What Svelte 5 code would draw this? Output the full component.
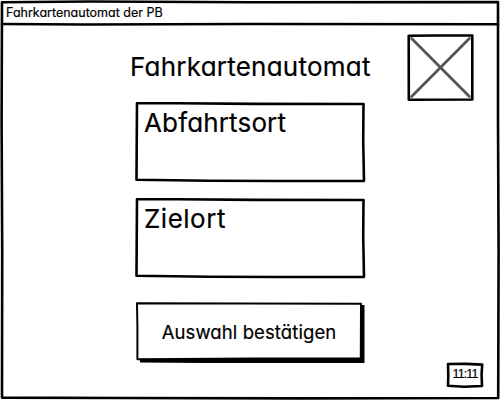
<script>
  const fields = ['Abfahrtsort', 'Zielort'];
</script>

<main class="window">
  <svg class="frame" viewBox="0 0 500 400" aria-hidden="true">
    <path d="M2 2.2L90 1.5L250 2.2L498 2L498 120L498.6 250L498.2 398L300 398.4L120 398L2 397.6L2.2 250L1.6 120Z" />
    <path d="M2 24L85 24.5L250 24L498 24.2" />
  </svg>
  <header><span>Fahrkartenautomat der PB</span></header>
  <div class="content">
    <div class="left"></div>
    <section class="form">
      <h1>Fahrkartenautomat</h1>
      {#each fields as field}
        <div class="field">
          <svg class="frame" viewBox="0 0 230 80" aria-hidden="true">
            <path d="M2 2.3L42 2.3L120 2.9L228.5 3L228.2 40L229 79.9L145 80L75 79.8L1.5 78.8L1.7 48Z" />
          </svg>
          <span class="label {field.toLowerCase()}">{field}</span>
        </div>
      {/each}
      <button>
        <svg class="frame" viewBox="0 0 230 62" aria-hidden="true">
          <path class="shadow" d="M5 56.5L225.5 56.5V4H229.5V62L70 62L5 61.5Z" />
          <path class="face" d="M2 2.2L110 2.5L226 2.8L225.8 57.6L120 57.5L2.4 58.3L2.4 25Z" />
        </svg>
        <span>Auswahl bestätigen</span>
      </button>
    </section>
    <aside>
      <svg class="logo" viewBox="0 0 67 67" width="67" height="67" aria-hidden="true">
        <path class="cross" d="M4.6 4.6L62.4 62.4M62.4 4.6L4.6 62.4" />
        <path d="M1.7 1.7L30 1.5L65.3 1.5L65.3 65.5L1.8 65.7Z" />
      </svg>
      <div class="clock">
        <svg class="frame" viewBox="0 0 38 26" aria-hidden="true">
          <path d="M2 2L20 1.9L36.2 2.6L35.6 12L36 24L18 24.8L2 23.8L2.3 14Z" />
        </svg>
        <span>11:11</span>
      </div>
    </aside>
  </div>
</main>

<style>
  :global(body) { background: #fff; }
  .window {
    position: relative;
    box-sizing: border-box;
    width: 500px;
    height: 400px;
    overflow: hidden;
    display: flex;
    flex-direction: column;
    background: #fff;
    color: #000;
    font-family: Inter, "Liberation Sans", sans-serif;
    font-feature-settings: "cv11" 1;
    -webkit-text-stroke: 0.2px #000;
  }
  span, h1 { position: relative; white-space: nowrap; }
  .frame {
    position: absolute;
    inset: 0;
    width: 100%;
    height: 100%;
    overflow: visible;
    pointer-events: none;
  }
  path { fill: none; stroke: #000; stroke-width: 2.6; stroke-linejoin: round; stroke-linecap: round; }
  header { height: 25px; padding-left: 6px; box-sizing: border-box; line-height: 25px; font-size: 12.5px; letter-spacing: 0; flex: none; }
  .content { flex: 1; display: grid; grid-template-columns: 135px 230px 135px; }
  .form { display: flex; flex-direction: column; align-items: stretch; }
  h1 {
    margin: 25px 0 18px -5px;
    font-size: 26px;
    font-weight: 400;
    line-height: 34px;
    letter-spacing: 0.23px;
    height: 33px;
  }
  .field { position: relative; box-sizing: border-box; height: 80px; padding: 5px 0 0 9px; margin-bottom: 16px; font-size: 26px; line-height: 34px; }
  .label { display: block; letter-spacing: 0.15px; }
  .zielort { letter-spacing: 0.5px; }
  button {
    position: relative;
    width: 230px;
    height: 62px;
    margin-top: 8px;
    padding: 0 2px 0 0;
    border: 0;
    background: none;
    color: inherit;
    font: inherit;
    font-feature-settings: inherit;
    font-size: 18.5px;
    letter-spacing: 0.1px;
  }
  .face { fill: #fff; stroke-width: 2; }
  .shadow { fill: #000; stroke: none; }
  aside { display: flex; flex-direction: column; align-items: flex-end; justify-content: space-between; padding: 9px 0 12px; }
  .logo { margin-right: 26px; }
  .cross { stroke: #555; stroke-width: 2.8; }
  .clock { position: relative; width: 38px; height: 26px; margin-right: 16px; text-align: center; line-height: 25px; font-family: "Liberation Sans", sans-serif; font-size: 12.5px; letter-spacing: -0.9px; }
</style>
